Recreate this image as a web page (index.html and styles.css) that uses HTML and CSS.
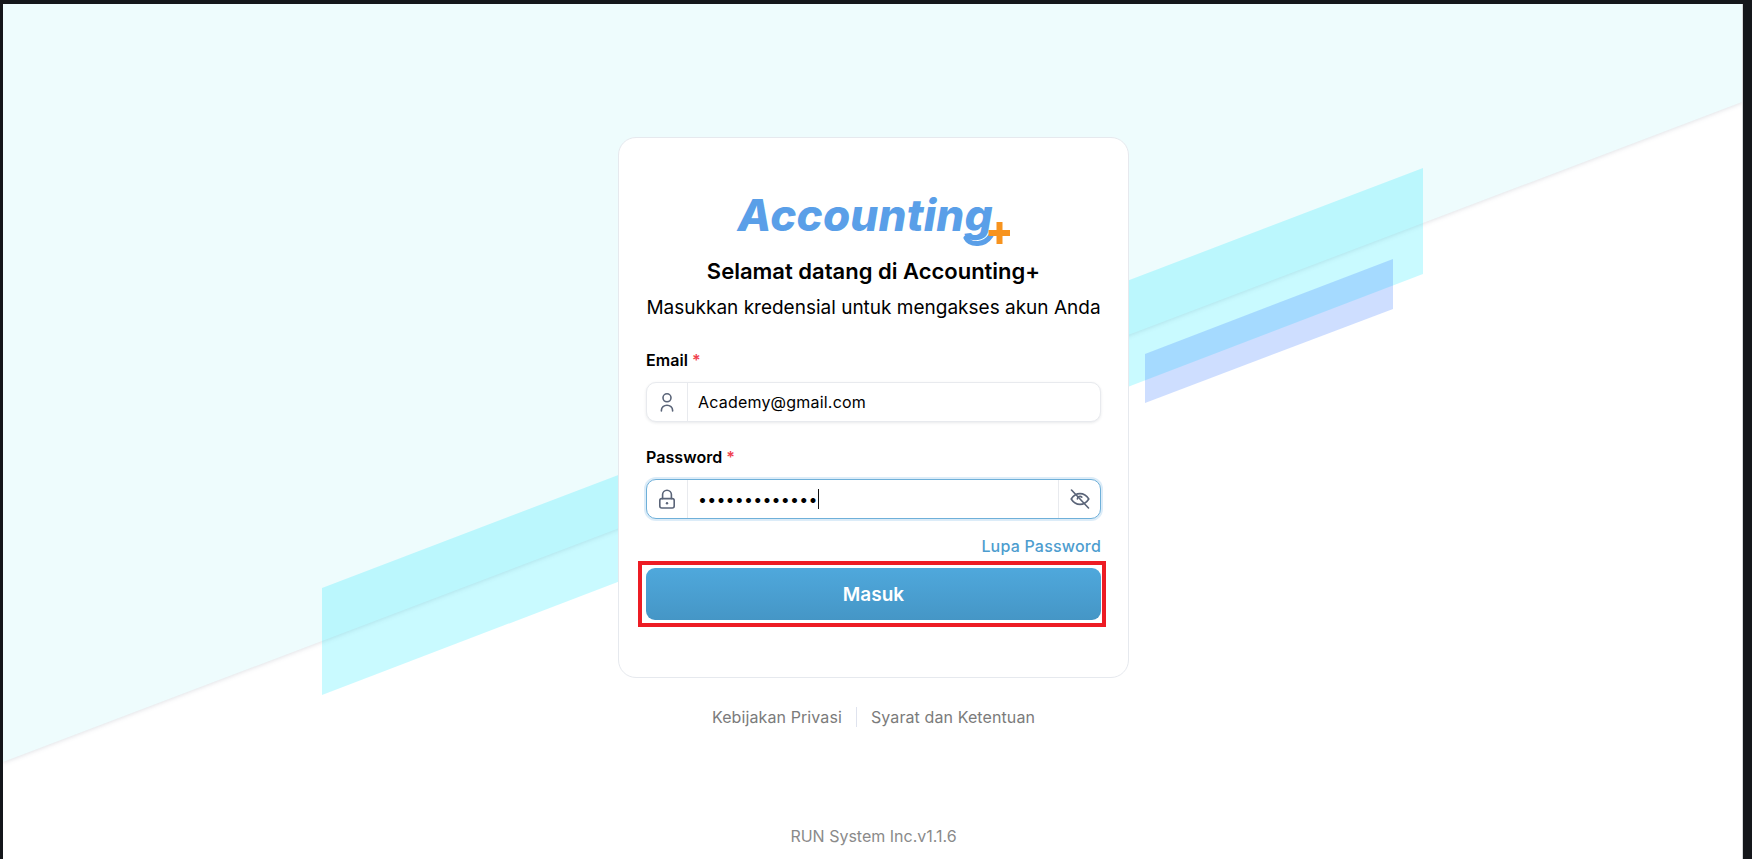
FILE: index.html
```html
<!DOCTYPE html>
<html lang="en">
<head>
    <meta charset="UTF-8">
    <meta name="viewport" content="width=device-width, initial-scale=1.0">
    <title>Accounting+</title>
    <link rel="stylesheet" href="styles.css">
</head>
<body>

    <main class="screen">
        <div class="backdrop">
            <div class="slope-wrap"><div class="slope"></div></div>
            <div class="strip strip-cyan"></div>
            <div class="strip strip-blue"></div>
        </div>

        <div class="login-card">
            <div class="logo">
                <span class="logo-text">Accounting</span>
                <svg class="logo-mark" viewBox="0 0 272 52" aria-hidden="true">
                    <path d="M228 42q3 6 12 5.500q8-.5 13-8" fill="none" stroke="#5a9fe8" stroke-width="5" stroke-linecap="round"/>
                    <rect x="258.500" y="26" width="6" height="22" fill="#f7931e"/>
                    <rect x="250.500" y="34" width="22" height="6" fill="#f7931e"/>
                </svg>
            </div>
            <h1>Selamat datang di Accounting+</h1>
            <p class="subtitle">Masukkan kredensial untuk mengakses akun Anda</p>

            <div class="field">
                <label>Email <span class="required">*</span></label>
                <div class="input-group">
                    <span class="addon">
                        <svg class="icon" viewBox="0 0 20 20" aria-hidden="true">
                            <circle cx="10" cy="5.800" r="4"/>
                            <path d="M4.400 19v-.8a5.600 5 0 0 1 11.200 0v.8"/>
                        </svg>
                    </span>
                    <span class="value">Academy@gmail.com</span>
                </div>
            </div>

            <div class="field">
                <label>Password <span class="required">*</span></label>
                <div class="input-group focused">
                    <span class="addon">
                        <svg class="icon" viewBox="0 0 20 20" aria-hidden="true">
                            <rect x="2.800" y="9.600" width="14.400" height="9.400" rx="2"/>
                            <path d="M5.600 9.600V5.600a4.400 4.400 0 0 1 8.800 0v4"/>
                            <circle class="icon-dot" cx="10" cy="14.300" r="1.200"/>
                        </svg>
                    </span>
                    <span class="value"><span class="dots">•••••••••••••</span><span class="caret"></span></span>
                    <span class="addon addon-end">
                        <svg class="icon" viewBox="0 0 20 20" aria-hidden="true">
                            <path d="M1.200 10S4.600 4.600 10 4.600 18.800 10 18.800 10 15.400 15.400 10 15.400 1.200 10 1.200 10Z"/>
                            <path d="M7.400 10a2.600 2.600 0 0 1 4.400-1.900"/>
                            <path d="M1.500 1l17 18"/>
                        </svg>
                    </span>
                </div>
            </div>

            <a class="forgot" href="#">Lupa Password</a>
            <button class="submit" type="button">Masuk</button>
        </div>

        <nav class="links">
            <a href="#">Kebijakan Privasi</a>
            <span class="divider"></span>
            <a href="#">Syarat dan Ketentuan</a>
        </nav>

        <div class="version">RUN System Inc.v1.1.6</div>
    </main>

</body>
</html>
```

FILE: styles.css
```css
* {
    box-sizing: border-box;
}
html, body {
    height: 100%;
}
body {
    margin: 0;
    padding: 4px 9px 0 3px;
    overflow: hidden;
    background-color: #14161a;
    font-family: 'Inter', sans-serif;
    color: #000;
}
.screen {
    position: relative;
    display: flex;
    flex-direction: column;
    align-items: center;
    height: 100%;
    padding: 133px 0 0 2px;
    overflow: hidden;
    background-color: #fff;
    border-right: 1px solid #d4d6d8;
}

/* background shapes */
.backdrop {
    position: absolute;
    inset: 0;
}
.slope-wrap {
    position: absolute;
    inset: 0;
    filter: drop-shadow(0 1px 2px rgba(40, 50, 80, 0.14));
}
.slope {
    height: 100%;
    background-color: #eefcfd;
    clip-path: polygon(0 0, 100% 0, 100% 98px, 0 758px);
}
.strip {
    position: absolute;
}
.strip-cyan {
    left: 319px;
    top: 164px;
    width: 1101px;
    height: 527px;
    background-color: rgba(0, 232, 255, 0.21);
    clip-path: polygon(0 420px, 100% 0, 100% 106px, 0 100%);
}
.strip-blue {
    left: 1142px;
    top: 255px;
    width: 248px;
    height: 144px;
    background-color: rgba(60, 125, 255, 0.25);
    clip-path: polygon(0 95px, 100% 0, 100% 50px, 0 100%);
}

/* card */
.login-card {
    position: relative;
    display: flex;
    flex-direction: column;
    width: 511px;
    height: 541px;
    padding: 58px 27px 0;
    background-color: #fff;
    border: 1px solid #e6e9ee;
    border-radius: 18px;
}
.logo {
    position: relative;
    align-self: center;
    width: 272px;
    height: 52px;
}
.logo-text {
    display: block;
    font-size: 44px;
    line-height: 38px;
    font-weight: 800;
    font-style: italic;
    letter-spacing: 0.2px;
    white-space: nowrap;
    color: #5a9fe8;
}
.logo-mark {
    position: absolute;
    inset: 0;
    width: 272px;
    height: 52px;
}
h1 {
    margin: 9px 0 0;
    font-size: 22px;
    line-height: 28px;
    font-weight: 600;
    text-align: center;
}
.subtitle {
    margin: 9px 0 0;
    font-size: 19px;
    line-height: 28px;
    text-align: center;
    white-space: nowrap;
}
.field {
    margin-top: 26px;
}
.field + .field {
    margin-top: 23px;
}
label {
    display: block;
    margin-bottom: 10px;
    font-size: 16px;
    line-height: 24px;
    font-weight: 600;
    letter-spacing: 0.05px;
}
.required {
    color: #f0424f;
}
.input-group {
    display: flex;
    align-items: stretch;
    height: 40px;
    background-color: #fff;
    border: 1px solid #e8eaee;
    border-radius: 10px;
    box-shadow: 0 1px 3px rgba(30, 40, 60, 0.1);
}
.input-group.focused {
    border-color: #6fb0d9;
    box-shadow: 0 0 0 2px rgba(80, 160, 220, 0.2);
}
.addon {
    display: flex;
    flex: none;
    align-items: center;
    justify-content: center;
    width: 41px;
    border-right: 1px solid #e8eaee;
}
.addon-end {
    width: 42px;
    border-right: 0;
    border-left: 1px solid #e8eaee;
}
.icon {
    width: 20px;
    height: 20px;
    fill: none;
    stroke: #5a6478;
    stroke-width: 1.6;
    stroke-linecap: round;
    stroke-linejoin: round;
}
.icon-dot {
    fill: #5a6478;
    stroke: none;
}
.value {
    display: flex;
    flex: 1;
    align-items: center;
    padding-left: 10px;
    font-size: 16px;
    letter-spacing: 0.2px;
}
.caret {
    width: 1px;
    height: 20px;
    background-color: #111;
}
.forgot {
    align-self: flex-end;
    margin-top: 16px;
    font-size: 16px;
    line-height: 22px;
    font-weight: 500;
    letter-spacing: 0.2px;
    color: #4d9dcf;
    text-decoration: none;
}
.submit {
    position: relative;
    height: 52px;
    margin-top: 11px;
    padding: 0;
    border: 0;
    border-radius: 9px;
    background: linear-gradient(#4fa8dc, #4596c6);
    font-family: inherit;
    font-size: 19px;
    font-weight: 600;
    color: #fff;
}
/* red highlight drawn over the screenshot */
.submit::after {
    content: "";
    position: absolute;
    inset: -7px -5px -7px -8px;
    border: 4px solid #ed1c24;
}

/* footer */
.links {
    display: flex;
    align-items: center;
    gap: 14px;
    margin-top: 28px;
    font-size: 16px;
    line-height: 22px;
    letter-spacing: 0.1px;
}
.links a {
    color: #7b7b7b;
    text-decoration: none;
}
.divider {
    width: 1px;
    height: 20px;
    background-color: #dfe3ee;
}
.version {
    margin-top: 97px;
    font-size: 16px;
    line-height: 22px;
    color: #8a8a8a;
}
```
